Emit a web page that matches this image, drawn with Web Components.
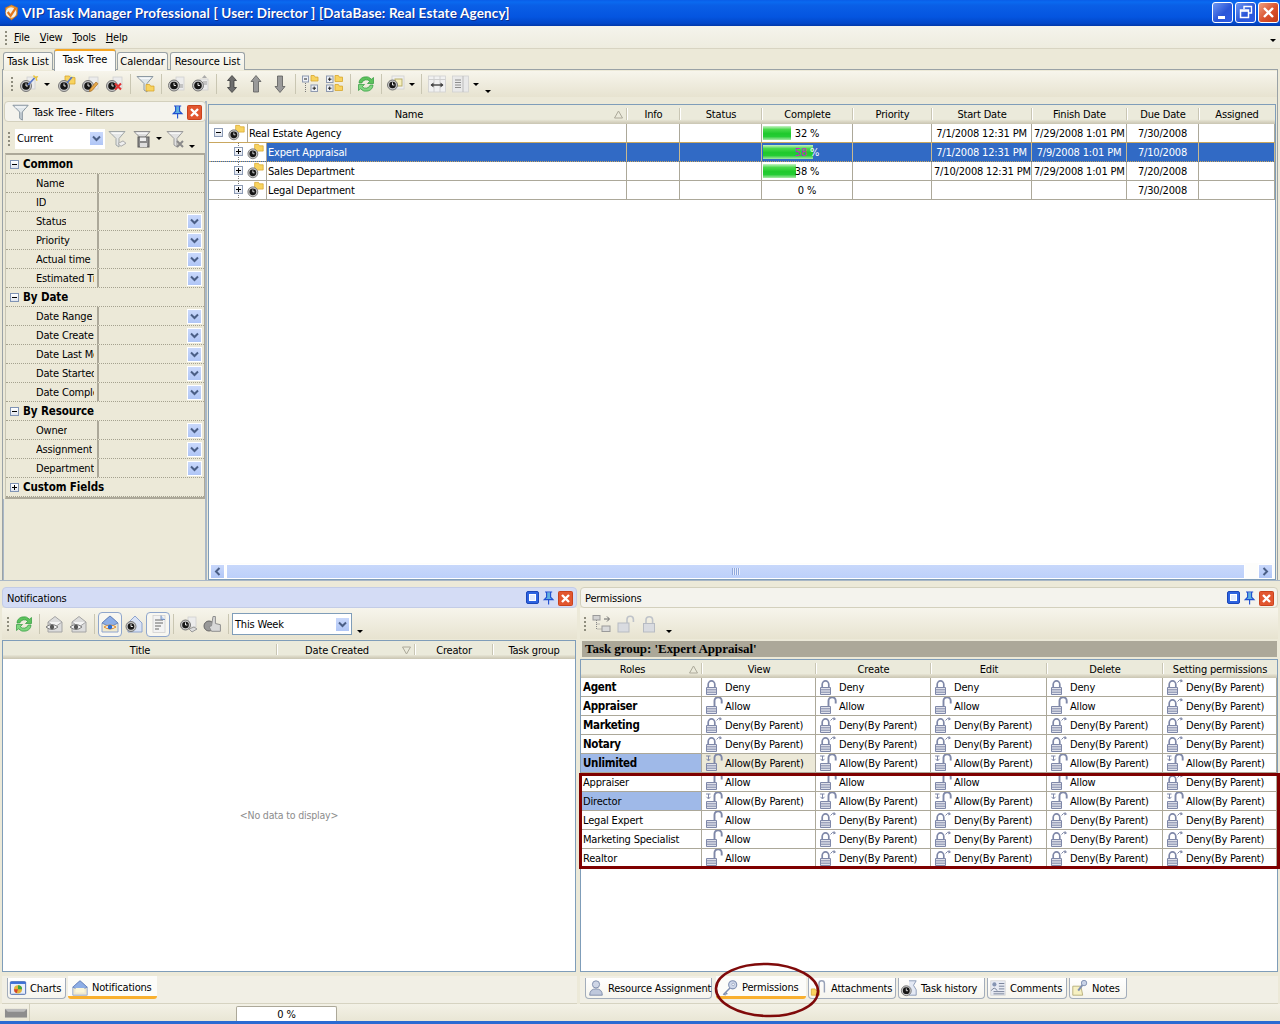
<!DOCTYPE html>
<html lang="en">
<head>
<meta charset="utf-8">
<title>VIP Task Manager Professional</title>
<style>
html,body{margin:0;padding:0;background:#ece9d8}
body{width:1280px;height:1024px;overflow:hidden}
</style>
</head>
<body>
<vip-app></vip-app>
<script>
const UI = '"DejaVu Sans Condensed","Liberation Sans",sans-serif';
function def(tag, css, html) {
  customElements.define(tag, class extends HTMLElement {
    connectedCallback() {
      if (this.shadowRoot) return;
      const r = this.attachShadow({mode: 'open'});
      r.innerHTML = `<style>${css}</style>` + (typeof html === 'function' ? html(this) : html);
    }
  });
}

/* ---------- icon parts ---------- */
const clock = (x, y, r = 5.5) => `<circle cx="${x}" cy="${y}" r="${r}" fill="#c8c8c8" stroke="#6c6c6c" stroke-width=".9"/><circle cx="${x}" cy="${y}" r="${r - 1.7}" fill="#161616"/><path d="M${x} ${y - 2.6}V${y}H${x + 1.9}" stroke="#fff" stroke-width=".9" fill="none"/>`;
const folder = (x, y, w, h) => `<path d="M${x} ${y + h}V${y}h${w * .45}l1 1.6h${w * .55 - 1}V${y + h}z" fill="#f8d35f" stroke="#d7a62d" stroke-width=".8"/>`;
const page = (x, y, w, h, f = '#ececec') => `<rect x="${x}" y="${y}" width="${w}" height="${h}" fill="${f}" stroke="#d0d0d0" stroke-width=".8"/>`;
const funnel = (f = '#dfe6ea', s = '#8d99a3') => `<path d="M1 2.5H17L11 9.5V18L8 16V9.5z" fill="${f}" stroke="${s}" stroke-width="1"/><path d="M3.5 4.2H14.5" stroke="#fff" stroke-width="1"/>`;
const vArrow = (up, down, f = '#9a9a9a') => {
  const s = '#5c5c5c';
  if (up && down) return `<path d="M10 1.5L14.5 6.5H12V13.5H14.5L10 18.5L5.5 13.5H8V6.5H5.5z" fill="#6d6d6d" stroke="#3e3e3e" stroke-width=".8"/>`;
  if (up) return `<path d="M10 1.5L15 7.5H12.5V18H7.5V7.5H5z" fill="${f}" stroke="${s}" stroke-width=".8"/>`;
  return `<path d="M7.5 2H12.5V12.5H15L10 18.5L5 12.5H7.5z" fill="${f}" stroke="${s}" stroke-width=".8"/>`;
};
const lockCol = '#7f88a8';
const lockBody = `<path d="M1.5 10.5h10v7h-10z" fill="#dfe1ea" stroke="${lockCol}" stroke-width="1"/><path d="M1.5 12.8h10M1.5 15.2h10" stroke="${lockCol}" stroke-width="1"/>`;
const closed = `<path d="M3.2 10.5V7.5a3.3 3.6 0 0 1 6.6 0v3" fill="none" stroke="${lockCol}" stroke-width="1.7"/>` + lockBody;
const open = `<path d="M9.5 10.5V4.8a3.6 3.6 0 0 1 7.2 0V7.5" fill="none" stroke="${lockCol}" stroke-width="1.9"/>` + lockBody;
const refresh = `<path d="M3 9A7 6.5 0 0 1 15.5 5.2L17.5 3.5V9.5H11.5L13.8 7.3A4.6 4.2 0 0 0 5.8 9z" fill="#5cc25c" stroke="#2f9a3c" stroke-width=".7"/><path d="M17 11A7 6.5 0 0 1 4.5 14.8L2.5 16.5V10.5H8.5L6.2 12.7A4.6 4.2 0 0 0 14.2 11z" fill="#7fd67f" stroke="#2f9a3c" stroke-width=".7"/>`;
const eye = `<path d="M1 13Q7 8 13 13Q7 18 1 13z" fill="#f2f2f2" stroke="#7b7b7b"/><circle cx="7" cy="13" r="2.2" fill="#555"/>`;
const envGray = `<path d="M3 8L10 2.5L17 8V18H3z" fill="#dcdcdc" stroke="#a4a4a4"/><path d="M3 8L10 13L17 8" fill="#f3f3f3" stroke="#a4a4a4"/>`;
const envBlue = `<path d="M2 9L10 2L18 9V18H2z" fill="#efe9cf" stroke="#8ea4cf"/><path d="M2 9L10 2L18 9L10 13z" fill="#8daee6" stroke="#6b87bd"/>`;
const ICONS = {
  tree: folder(8.5, 1.5, 9.5, 7.5) + clock(6.5, 12, 5.5),
  clockwand: page(8, 3, 8, 12) + clock(7, 12) + `<path d="M9 11L15.5 4" stroke="#5a78c8" stroke-width="1.8"/><path d="M14.5 1.5l1.4 1.7 2.2-.4-1 2 1 1.8" stroke="#e7c23a" fill="none" stroke-width="1.3"/>`,
  clockfold: folder(8, 2, 10, 8) + clock(7, 12) + `<path d="M10 9L15 3" stroke="#5a78c8" stroke-width="1.7"/><path d="M13 1l2 1.6L17.5 2" stroke="#f2f2a0" fill="none"/>`,
  clockedit: page(8, 3, 9, 12) + clock(7, 12) + `<path d="M9 15L15 8l2 1.7-6 7-2.5.8z" fill="#e8a94a" stroke="#a86e22" stroke-width=".7"/>`,
  clockdel: page(8, 3, 9, 11) + clock(7, 12) + `<path d="M10 9.5l6 6M16 9.5l-6 6" stroke="#e03333" stroke-width="2.1"/>`,
  funnelfold: funnel() + folder(10, 10.5, 8, 6.5),
  funnelbig: `<path d="M1 2.5H18L11.5 10V19L8.5 17V10z" fill="#dfe6ea" stroke="#7f8d99" stroke-width="1"/><path d="M3.5 4.5H15.5" stroke="#fff" stroke-width="1"/><path d="M10 10.5V18" stroke="#9fabb5"/>`,
  clockdoc: page(9, 3, 8, 13) + clock(7, 11.5) + `<path d="M12 11h4M12 13h4" stroke="#999"/>`,
  clockup: page(9, 5, 8, 11) + clock(7, 11.5) + `<path d="M13.5 1l2.5 3h-5z" fill="#aaa"/><path d="M12 8h4M12 10h4" stroke="#999"/>`,
  updown: vArrow(1, 1), up: vArrow(1, 0), down: vArrow(0, 1),
  treeco: `<rect x="1.5" y="2" width="6" height="6" fill="#eef1f6" stroke="#8e99b0"/><path d="M3 5H6" stroke="#222"/>` + folder(10, 1.5, 7, 5.5) + `<path d="M4.5 9V18" stroke="#777" stroke-dasharray="1 1"/><rect x="10" y="11" width="6.5" height="6.5" fill="#eef1f6" stroke="#8e99b0"/><path d="M11.5 14.2h3.5M13.2 12.5V16" stroke="#222"/>`,
  treeex: `<rect x="1.5" y="2" width="6.5" height="6.5" fill="#eef1f6" stroke="#8e99b0"/><path d="M3 5.2h3.5M4.7 3.5V7" stroke="#222"/><rect x="1.5" y="11" width="6.5" height="6.5" fill="#eef1f6" stroke="#8e99b0"/><path d="M3 14.2h3.5M4.7 12.5V16" stroke="#222"/>` + folder(10, 1.5, 7.5, 6) + folder(10, 10.5, 7.5, 6),
  refresh,
  clockstack: page(5, 2, 12, 13, '#f0f0f0') + `<rect x="8" y="5" width="7" height="7" fill="#f6efbd" stroke="#b8ae6a"/>` + clock(5.5, 11, 5),
  fitcol: page(1.5, 2, 17, 16, '#f1f1f1') + `<path d="M1.5 5.5h17M7 2v16M13 2v16" stroke="#cfcfcf"/><path d="M4 11h12" stroke="#444" stroke-width="1.4"/><path d="M6.5 8.5L3.5 11l3 2.5zM13.5 8.5l3 2.5-3 2.5z" fill="#444"/>`,
  columns: page(1.5, 2, 16, 16, '#e9e9e9') + `<path d="M12 2v16" stroke="#bbb"/><path d="M4 6h6M4 8.5h6M4 11h6M4 13.5h6" stroke="#8c8c8c"/>`,
  funnelx: funnel('#e4e6e6', '#a1a7a7') + `<path d="M10 14.5l5-2.6 3 2.4-5 3z" fill="#eee" stroke="#aaa"/>`,
  funnelsave: funnel('#dcdcdc', '#8f8f8f') + `<rect x="5" y="8" width="11" height="10" fill="#8a8a8a" stroke="#5b5b5b"/><rect x="7" y="8.5" width="6" height="3.5" fill="#eee"/><rect x="7" y="14" width="7" height="4" fill="#ddd"/>`,
  funneldel: funnel('#e1e1e1', '#9b9b9b') + `<path d="M11 12l6 6M17 12l-6 6" stroke="#8a8a8a" stroke-width="2"/>`,
  pin: `<path d="M5 2.5h9M7 3v6l-3 3h11l-3-3V3M9.5 12v6" stroke="#1f4fd0" stroke-width="1.4" fill="#5fb0df"/>`,
  close: `<rect x="1.5" y="1.5" width="14" height="14" rx="1" fill="#e2562f" stroke="#c9421d"/><path d="M5 5l7 7M12 5l-7 7" stroke="#fff" stroke-width="2.4"/>`,
  restore: `<rect x="1.5" y="1.5" width="12" height="12" rx="1.5" fill="#2d63e0" stroke="#1b46b8"/><rect x="4.5" y="4.5" width="6" height="6" fill="#dfe9ff" stroke="#fff"/>`,
  enveye1: envGray + eye, enveye2: envGray + eye,
  envuser: envBlue + `<path d="M4 13Q10 9 16 13Q10 17 4 13z" fill="#f6f6f6" stroke="#e08c2b"/><circle cx="10" cy="13" r="2.3" fill="#2a6bd0"/>`,
  envclock: `<path d="M4 9L11 2L18 9V18H4z" fill="#d9e2f4" stroke="#8ea4cf"/>` + clock(7, 12.5, 5),
  docs: page(5, 1.5, 12, 17, '#f3f3f3') + `<path d="M7 6h8M7 9h8M7 12h6M7 15h4" stroke="#666"/><path d="M13 1.5v4h4" fill="#bcd0ee" stroke="#7a93bf"/>`,
  clockeye: page(9, 3, 8, 10) + clock(6.5, 11, 5) + `<path d="M10 15l5-2 3 2-5 3z" fill="#ddd" stroke="#999"/>`,
  clockhand: `<circle cx="6" cy="12" r="5" fill="#999" stroke="#666"/><path d="M10 2.5h2.4v7l5 1.2v6.6H8.5L6 12.5l2.5-.6z" fill="#d8d8d8" stroke="#8f8f8f"/>`,
  tree2: `<rect x="1" y="1.5" width="7" height="4.5" fill="#d2d2d2" stroke="#9a9a9a"/><path d="M4.5 6V15H10M4.5 10H8" stroke="#888" stroke-dasharray="1 1" fill="none"/><rect x="10" y="12" width="8" height="5.5" fill="#d9d9d9" stroke="#9a9a9a"/><path d="M12 5h5M15 2.5L17.5 5 15 7.5" stroke="#666" fill="none"/>`,
  unlock: `<path d="M11 9V5.5a3.2 3.2 0 0 1 6.4 0V8" fill="none" stroke="#bfc3c9" stroke-width="1.6"/><rect x="2" y="9" width="11" height="9" fill="#d9dbe0" stroke="#b7bbc2"/>`,
  lockg: `<path d="M6 9.5V6a3.3 3.3 0 0 1 6.6 0v3.5" fill="none" stroke="#bfc3c9" stroke-width="1.6"/><rect x="3.5" y="9.5" width="11" height="8.5" fill="#d9dbe0" stroke="#b7bbc2"/>`,
  deny: closed,
  allow: open,
  denyp: closed + `<path d="M11.5 5.5Q13.5 2 16 4M14.8 2.2l1.6 2-2.2.7" stroke="${lockCol}" fill="none" stroke-width="1"/>`,
  allowp: open + `<path d="M1 3H5.5M3.5 3V7.5M1.5 5.8L3.5 8 5.5 5.8" stroke="${lockCol}" fill="none" stroke-width="1"/>`,
  chart: `<rect x="1.5" y="3" width="17" height="14" rx="1" fill="#e8eefb" stroke="#3c5fa8"/><rect x="1.5" y="3" width="17" height="2.5" fill="#3c6fd6"/><circle cx="10" cy="11.5" r="4.5" fill="#e2b33a"/><path d="M10 11.5V7a4.5 4.5 0 0 1 4.5 4.5z" fill="#3ea53e"/><path d="M10 11.5H5.5a4.5 4.5 0 0 0 3 4.2z" fill="#d6442b"/>`,
  mail: envBlue + `<path d="M5 10h10v5H5z" fill="#fbf6d8"/>`,
  user: `<circle cx="10" cy="6" r="4" fill="#cfd6e6" stroke="#7b89a8"/><path d="M3 18Q3 11 10 11Q17 11 17 18z" fill="#bfc8dc" stroke="#7b89a8"/>`,
  key: `<circle cx="13" cy="6.5" r="4.5" fill="#cfd8ea" stroke="#7f8fb0" stroke-width="1.2"/><circle cx="13.5" cy="6" r="1.4" fill="#fff" stroke="#7f8fb0" stroke-width=".7"/><path d="M10 10L2.5 17.5M5 15l2 2M3.5 16.5l1.6 1.6" stroke="#7f8fb0" stroke-width="1.6"/>`,
  attach: `<path d="M10 14V5a3 3 0 0 1 6 0v10" fill="none" stroke="#98a2b8" stroke-width="1.6"/>` + folder(1.5, 11, 9, 7),
  history: `<path d="M10 2h8l-3 5 3 5v6h-8" fill="#e4e9f4" stroke="#8695b3"/>` + clock(7, 13, 5.5),
  comments: page(2, 2, 16, 16, '#e8ebf3') + `<circle cx="6" cy="6" r="2.3" fill="#8695b3"/><path d="M2.5 13Q6 7.5 9 13M11 5h6M11 8h6M5 14h12M11 11h6M5 16.5h12" stroke="#6f7a92" fill="none"/>`,
  notes: `<path d="M2 8h9l2 10H2z" fill="#f7f1c2" stroke="#b5ad78"/><path d="M8 13L14 5" stroke="#7f8fb0" stroke-width="2.2"/><circle cx="14.5" cy="4.5" r="3" fill="#c8d2e6" stroke="#7f8fb0"/>`,
  logo: `<path d="M9 1L15.5 4 15 12 9 17 3 12 2.5 4z" fill="#f29a2e" stroke="#b9651a" stroke-width=".6"/><circle cx="8.5" cy="9" r="5.6" fill="#f4f1e6"/><path d="M5 8.5L8 12.5 13.5 4" stroke="#e5771a" stroke-width="2.4" fill="none"/>`,
  flag: `<rect x="1" y="2" width="23" height="9" fill="#8d8d8d"/><path d="M1 2H24L21 5H4z" fill="#bcbcbc"/>`
};

def('x-ico', ':host{display:inline-flex;flex:none;line-height:0}', el => {
  const s = +el.getAttribute('size') || 20;
  const v = el.getAttribute('vb') || '20';
  return `<svg xmlns="http://www.w3.org/2000/svg" width="${s}" height="${s}" viewBox="0 0 ${v} ${v}">${ICONS[el.getAttribute('name')] || ''}</svg>`;
});

/* ---------- chrome ---------- */
def('win-btn', `:host{display:block;width:21px;height:21px;box-sizing:border-box;border:1px solid #fff;border-radius:3px;background:linear-gradient(135deg,#6f97f2,#2a56d8 55%,#2d5be4);position:relative}
 :host([kind=close]){background:linear-gradient(135deg,#ee9f80,#d9502b 55%,#c23a16)} svg{display:block}`, el => {
  const k = el.getAttribute('kind');
  const p = k === 'close' ? '<path d="M5 5l9 9M14 5l-9 9" stroke="#fff" stroke-width="2.4"/>'
    : k === 'min' ? '<rect x="5" y="13" width="7" height="3" fill="#fff"/>'
    : '<path d="M8 6V3.5h7.5V10H13" fill="none" stroke="#fff" stroke-width="1.4"/><rect x="4.5" y="7" width="8" height="7.5" fill="none" stroke="#fff" stroke-width="1.5"/><path d="M4.5 8h8" stroke="#fff" stroke-width="1.6"/>';
  return `<svg width="19" height="19" viewBox="0 0 19 19">${p}</svg>`;
});

def('win-title', `:host{display:flex;align-items:center;height:26px;box-sizing:border-box;padding:0 1px 1px 3px;
  background:linear-gradient(#0a5de8 0,#0a6af0 8%,#0a5fe6 20%,#0455e0 65%,#0247c8 90%,#0238a8);color:#fff;flex:none}
 .t{font:bold 13.5px Lato,"Liberation Sans",sans-serif;letter-spacing:.15px;margin-left:2px;flex:1;white-space:nowrap;text-shadow:1px 1px 0 #0f2f90}
 .b{display:flex;gap:2px}`,
 `<x-ico name="logo" size="17" vb="18"></x-ico><span class="t"><slot></slot></span><span class="b"><win-btn kind="min"></win-btn><win-btn kind="max"></win-btn><win-btn kind="close"></win-btn></span>`);

def('tool-grip', `:host{display:block;width:2px;height:14px;flex:none;background:repeating-linear-gradient(#8f8d7e 0 2px,transparent 2px 4px)}`, '');

def('menu-item', `:host{display:block;margin-right:10px} ::slotted(u){text-decoration:underline}`, '<slot></slot>');
def('menu-bar', `:host{display:flex;align-items:center;height:23px;box-sizing:border-box;padding:1px 4px 0 5px;flex:none;background:linear-gradient(#f5f4ec,#eeecdf);border-bottom:1px solid #d8d4c2;color:#000}
 tool-grip{margin-right:7px} .end{margin-left:auto;margin-top:6px;width:0;height:0;border:3px solid transparent;border-top-color:#000;border-bottom:0}`, `<tool-grip></tool-grip><slot></slot><span class="end"></span>`);

def('doc-tab', `:host{display:flex;align-items:center;justify-content:center;box-sizing:border-box;height:18px;margin-top:3px;padding:0 1px;letter-spacing:0;
   background:linear-gradient(#fbfaf6,#f0eee2);border:1px solid #9aa2a6;border-bottom:0;border-radius:3px 3px 0 0;color:#000;flex:none}
 :host([active]){height:22px;margin-top:0;background:#fcfcfa;border-color:#9aa2a6;border-top:2px solid #f5a623;position:relative;z-index:2;padding-bottom:3px}`, '<slot></slot>');
def('doc-tabs', `:host{display:flex;gap:1px;height:20px;padding-left:3px;flex:none;background:#ece9d8;position:relative;z-index:2}`, '<slot></slot>');

/* toolbar pieces */
def('t-btn', `:host{display:flex;align-items:center;justify-content:center;width:var(--w,24px);height:22px;flex:none;box-sizing:border-box}
 :host([on]){border:1px solid #8fa6cc;border-radius:4px;background:#f8f7f1;height:25px}`, el => `<x-ico name="${el.getAttribute('icon')}" size="${el.getAttribute('size') || 20}"></x-ico>`);
def('t-sep', `:host{display:block;width:var(--w,7px);height:20px;flex:none;background:linear-gradient(#c9c6b2,#c9c6b2) center/1px 100% no-repeat}`, '');
def('t-arr', `:host{display:flex;align-items:center;width:var(--w,10px);padding-left:var(--pl,3px);box-sizing:border-box;height:20px;flex:none}
 i{display:block;width:0;height:0;border:3px solid transparent;border-top-color:#000;border-bottom:0}`, '<i></i>');
def('t-more', `:host{display:flex;align-items:flex-end;height:20px;width:var(--w,12px);padding-left:var(--pl,3px);box-sizing:border-box;flex:none}
 i{display:block;width:0;height:0;border:3px solid transparent;border-top-color:#000;border-bottom:0;margin-bottom:1px}`, '<i></i>');
def('tool-strip', `:host{display:flex;align-items:center;flex:none;height:var(--h,26px);box-sizing:border-box;padding:var(--pt,0) 0 0 var(--pl,8px);background:linear-gradient(#f7f5ec,#e7e3d0)}
 tool-grip{margin-right:var(--gm,4px)}`, '<tool-grip></tool-grip><slot></slot>');

def('drop-btn', `:host{display:flex;align-items:center;justify-content:center;width:15px;height:15px;flex:none;box-sizing:border-box;background:linear-gradient(#c9d8fb,#b0c6f6);border:1px solid #fff}`,
  `<svg width="11" height="11" viewBox="0 0 11 11"><path d="M2 3.5L5.5 7 9 3.5" fill="none" stroke="#4b5f86" stroke-width="2"/></svg>`);
def('xp-combo', `:host{display:flex;align-items:center;justify-content:space-between;box-sizing:border-box;background:#fff;flex:none;height:20px;padding:0 1px 0 2px;color:#000}
 :host([framed]){border:1px solid #7f9db9} span{white-space:nowrap}`, '<span><slot></slot></span><drop-btn></drop-btn>');

def('dock-head', `:host{display:flex;align-items:center;height:21px;box-sizing:border-box;padding:1px 2px 0 4px;flex:none;background:#f4f3ed;border:1px solid #d3d0bd;border-radius:4px;color:#000}
 :host([blue]){background:#d4dcf5;border-color:#c3cce6}
 .t{flex:1;white-space:nowrap} .i{display:flex;gap:0;align-items:center}`,
 el => `<slot name="lead"></slot><span class="t"><slot></slot></span><span class="i">${el.hasAttribute('restore') ? '<x-ico name="restore" size="16" vb="16"></x-ico>' : ''}<x-ico name="pin" size="16"></x-ico><x-ico name="close" size="17" vb="17"></x-ico></span>`);

/* header cells */
def('hdr-cell', `:host{display:flex;align-items:center;justify-content:center;position:relative;box-sizing:border-box;min-width:0;color:#000;white-space:nowrap;height:100%}
 :host([sort]){padding-right:18px}
 :host(:not(:last-child))::after{content:"";position:absolute;right:0;top:3px;bottom:4px;width:1px;background:#c9c6b4;box-shadow:1px 0 0 #fff}
 svg{position:absolute;right:4px;top:5px}`,
 el => `<slot></slot>` + (el.hasAttribute('sort') ? `<svg width="9" height="9" viewBox="0 0 9 9"><path d="${el.getAttribute('sort') === 'up' ? 'M4.5 1L8.5 8H.5z' : 'M.5 1H8.5L4.5 8z'}" fill="none" stroke="#aca899"/></svg>` : ''));
def('grid-head', `:host{display:grid;grid-template-columns:var(--cols);height:var(--hh,19px);box-sizing:border-box;background:linear-gradient(#ebeadb 0,#ebeadb 75%,#d9d5c3 88%,#c9c5b2);flex:none}`, '<slot></slot>');

/* data-cell */
def('g-cell', `:host{display:flex;align-items:center;box-sizing:border-box;height:18px;min-width:0;overflow:hidden;white-space:nowrap;border-right:1px solid var(--bc,#aca899);padding:0 2px}
 :host([c]){justify-content:center;padding:0}`, '<slot></slot>');
def('g-row', `:host{display:grid;grid-template-columns:var(--cols);height:19px;box-sizing:border-box;border-bottom:1px solid #aca899;background:#fff;color:#000;flex:none}
 :host([sel]){--bc:#c9b98f;background:#316ac5;color:#fff;border-bottom:1px dotted #c9a760;box-shadow:0 -1px 0 0 #c9a760}`, '<slot></slot>');

/* tree name cell */
def('tree-cell', `:host{display:flex;height:18px;flex:1;min-width:0;background:#fff;color:#000}
 .bw{flex:none;width:9px;height:100%}
 :host([level]) .bw{background:repeating-linear-gradient(#777 0 1px,transparent 1px 2px) center/1px 100% no-repeat}
 .b{display:block;width:9px;height:9px;box-sizing:border-box;border:1px solid #8c9bb5;background:linear-gradient(#fff,#dfe4ee);margin-top:4px;position:relative}
 .b::before{content:"";position:absolute;left:1px;right:1px;top:3px;height:1px;background:#000}
 :host(:not([open])) .b::after{content:"";position:absolute;top:1px;bottom:1px;left:3px;width:1px;background:#000}
 .txt{flex:1;padding-left:1px;display:flex;align-items:center;border-left:1px solid #aca899;white-space:nowrap;margin-left:1px}
 :host([sel]) .txt{background:#316ac5;color:#fff}`,
 el => {
   const lvl = +el.getAttribute('level') || 0;
   return `<span style="width:${lvl ? 25 : 5}px;flex:none"></span><span class="bw"><span class="b"></span></span><x-ico name="tree" size="18" style="margin-left:${lvl ? 4 : 5}px"></x-ico><span class="txt"><slot></slot></span>`;
 });

def('prog-cell', `:host{display:flex;align-items:center;justify-content:center;position:relative;height:18px;box-sizing:border-box;border-right:1px solid var(--bc,#aca899);white-space:nowrap}
 .bar{position:absolute;left:1px;top:2px;height:14px;background:linear-gradient(#c7f2c5 0,#48d94a 25%,#1fc92c 55%,#26cc35 75%,#a7e9a5 100%)}
 span{position:relative}`,
 el => `<div class="bar" style="width:${el.getAttribute('bar') || 0}px;${el.getAttribute('bar') ? '' : 'display:none'}"></div><span><slot></slot></span>`);

/* permissions */
def('perm-cell', `:host{display:flex;align-items:center;height:18px;box-sizing:border-box;border-right:1px solid #aca899;padding-left:3px;white-space:nowrap;color:#000;min-width:0;overflow:hidden}
 :host([hl]){background:#ece9d8}`,
 el => `<x-ico name="${el.getAttribute('k')}" size="20"></x-ico><span><slot></slot></span>`);
def('role-cell', `:host{display:flex;align-items:center;height:18px;box-sizing:border-box;border-right:1px solid #aca899;padding-left:2px;white-space:nowrap;color:#000}
 :host([b]){font-weight:bold;font-size:11.5px;letter-spacing:-.3px} :host([hl]){background:#9fb9e8}`, '<slot></slot>');

/* property grid */
def('pg-group', `:host{display:flex;align-items:center;height:19px;box-sizing:border-box;border-bottom:1px dotted #a5a28f;font-weight:bold;font-size:11.5px;letter-spacing:-.1px;padding-left:4px;color:#000;flex:none}
 .b{width:9px;height:9px;box-sizing:border-box;border:1px solid #7f93b4;background:linear-gradient(#fff,#dfe4ee);margin-right:4px;position:relative}
 .b::before{content:"";position:absolute;left:1px;right:1px;top:3px;height:1px;background:#000}
 :host(:not([open])) .b::after{content:"";position:absolute;top:1px;bottom:1px;left:3px;width:1px;background:#000}`, `<span class="b"></span><slot></slot>`);
def('pg-row', `:host{display:grid;grid-template-columns:91px 1fr;height:19px;box-sizing:border-box;border-bottom:1px dotted #a5a28f;color:#000;flex:none}
 .l{padding-left:30px;white-space:nowrap;display:flex;align-items:center;width:88px;box-sizing:border-box}
 .l span{display:block;overflow:hidden}
 .v{display:flex;align-items:center;justify-content:flex-end;padding-right:2px;border-left:2px solid #aca899}`,
 el => `<div class="l"><span><slot></slot></span></div><div class="v">${el.hasAttribute('drop') ? '<drop-btn></drop-btn>' : ''}</div>`);

/* bottom tabs */
def('b-tab', `:host{display:flex;align-items:center;box-sizing:border-box;height:21px;width:var(--w);background:linear-gradient(#fff,#f6f5ee);border:1px solid #a3adbb;border-top:0;border-radius:0 0 4px 4px;color:#000;white-space:nowrap;flex:none;padding-left:var(--p,1px)}
 :host([active]){height:23px;margin-top:-2px;padding-top:3px;background:#fcfcf9;border:0;border-bottom:3px solid #f9b02f;border-radius:0 0 3px 3px}
 x-ico{margin-right:3px}`, el => `<x-ico name="${el.getAttribute('icon')}" size="18"></x-ico><slot></slot>`);
def('b-tabs', `:host{display:flex;gap:var(--g,2px);height:28px;box-sizing:border-box;padding-left:var(--pl,4px);padding-top:2px;background:#f1efe5;flex:none;border-bottom:1px solid #d6d3c1}`, '<slot></slot>');

def('status-bar', `:host{display:flex;height:20px;box-sizing:border-box;flex:none;background:linear-gradient(#f3f1e6,#e9e6d5);border-bottom:3px solid #2a6ad2;align-items:stretch}
 .ic{width:30px;padding:3px 0 0 4px;box-sizing:border-box;border-right:1px solid #d2cfbd;flex:none}
 .gap{width:206px;flex:none}
 .p{width:101px;box-sizing:border-box;background:#fff;border:1px solid #aca899;border-bottom:0;border-radius:2px 2px 0 0;display:flex;align-items:center;justify-content:center;flex:none;color:#000;margin-top:2px}`,
 `<div class="ic"><x-ico name="flag" size="24" vb="25"></x-ico></div><div class="gap"></div><div class="p"><slot></slot></div>`);

/* ---------- panels ---------- */
def('filter-panel', `:host{display:flex;flex-direction:column;width:203px;flex:none;box-sizing:border-box;border-right:2px solid #a9b7c6;background:#ece9d8}
 dock-head{margin-right:-1px}
 .body{display:flex;flex-direction:column;margin:3px 0 0 1px;border-top:2px solid #aca899;border-bottom:2px solid #aca899;border-left:1px solid #c9c6b4;border-right:1px solid #aca899}
 .fill{flex:1;border-left:1px solid #a9b7c6;margin-left:-1px}
 .strip{display:flex;align-items:center;height:28px;box-sizing:border-box;padding:5px 0 0 4px;flex:none}
 tool-grip{margin-right:5px}
 xp-combo{width:90px;margin-right:1px}`,
 `<dock-head><x-ico slot="lead" name="funnelbig" size="18" style="margin:0 3px 0 3px"></x-ico>Task Tree - Filters</dock-head>
  <div class="strip"><tool-grip></tool-grip><xp-combo>Current</xp-combo><t-btn icon="funnelx" style="--w:24px"></t-btn><t-btn icon="funnelsave" style="--w:26px"></t-btn><t-arr style="--w:8px;--pl:0px"></t-arr><t-btn icon="funneldel" style="--w:24px"></t-btn><t-more style="--w:10px;--pl:1px"></t-more></div>
  <div class="body">
   <pg-group open>Common</pg-group><pg-row>Name</pg-row><pg-row>ID</pg-row><pg-row drop>Status</pg-row><pg-row drop>Priority</pg-row><pg-row drop>Actual time</pg-row><pg-row drop>Estimated Time</pg-row>
   <pg-group open>By Date</pg-group><pg-row drop>Date Range</pg-row><pg-row drop>Date Created</pg-row><pg-row drop>Date Last Modified</pg-row><pg-row drop>Date Started</pg-row><pg-row drop>Date Completed</pg-row>
   <pg-group open>By Resource</pg-group><pg-row drop>Owner</pg-row><pg-row drop>Assignment</pg-row><pg-row drop>Department</pg-row>
   <pg-group>Custom Fields</pg-group>
  </div><div class="fill"></div>`);

def('scroll-h', `:host{display:flex;align-items:center;height:16px;flex:none;padding:0 2px 0 1px;gap:1px;background:#fdfdfb}
 .a{width:15px;height:15px;background:linear-gradient(#c9d8fb,#b0c6f6);display:flex;align-items:center;justify-content:center;flex:none;border:1px solid #fff;box-sizing:border-box}
 .t{width:1019px;height:15px;background:linear-gradient(#c8d8fb,#bcd0fa);border:1px solid #fff;box-sizing:border-box;display:flex;align-items:center;justify-content:center;flex:none}
 .t i{display:block;width:8px;height:7px;background:repeating-linear-gradient(90deg,#8fa8dc 0 1px,#e6edfd 1px 2px)}
 .f{flex:1}`,
 `<div class="a"><svg width="9" height="11" viewBox="0 0 9 11"><path d="M6.5 2L3 5.5 6.5 9" fill="none" stroke="#4b5f86" stroke-width="2"/></svg></div><div class="t"><i></i></div><div class="f"></div><div class="a"><svg width="9" height="11" viewBox="0 0 9 11"><path d="M2.5 2L6 5.5 2.5 9" fill="none" stroke="#4b5f86" stroke-width="2"/></svg></div>`);

def('tree-grid', `:host{display:flex;flex-direction:column;flex:1;min-width:0;box-sizing:border-box;border:1px solid #7f9db9;background:#fff;margin:3px 0 0 1px;--cols:418px 53px 82px 91px 79px 100px 95px 72px 1fr}
 .fill{flex:1}`,
 `<grid-head><hdr-cell sort="up">Name</hdr-cell><hdr-cell>Info</hdr-cell><hdr-cell>Status</hdr-cell><hdr-cell>Complete</hdr-cell><hdr-cell>Priority</hdr-cell><hdr-cell>Start Date</hdr-cell><hdr-cell>Finish Date</hdr-cell><hdr-cell>Due Date</hdr-cell><hdr-cell>Assigned</hdr-cell></grid-head>
 <g-row><g-cell style="padding:0"><tree-cell open>Real Estate Agency</tree-cell></g-cell><g-cell></g-cell><g-cell></g-cell><prog-cell bar="28">32 %</prog-cell><g-cell></g-cell><g-cell c>7/1/2008 12:31 PM</g-cell><g-cell>7/29/2008 1:01 PM</g-cell><g-cell c>7/30/2008</g-cell><g-cell></g-cell></g-row>
 <g-row sel><g-cell style="padding:0"><tree-cell level="1" sel>Expert Appraisal</tree-cell></g-cell><g-cell></g-cell><g-cell></g-cell><prog-cell bar="50"><span style="color:#c81fc8">58 </span>%</prog-cell><g-cell></g-cell><g-cell c>7/1/2008 12:31 PM</g-cell><g-cell c>7/9/2008 1:01 PM</g-cell><g-cell c>7/10/2008</g-cell><g-cell></g-cell></g-row>
 <g-row><g-cell style="padding:0"><tree-cell level="1">Sales Department</tree-cell></g-cell><g-cell></g-cell><g-cell></g-cell><prog-cell bar="33">38 %</prog-cell><g-cell></g-cell><g-cell>7/10/2008 12:31 PM</g-cell><g-cell>7/29/2008 1:01 PM</g-cell><g-cell c>7/20/2008</g-cell><g-cell></g-cell></g-row>
 <g-row><g-cell style="padding:0"><tree-cell level="1">Legal Department</tree-cell></g-cell><g-cell></g-cell><g-cell></g-cell><prog-cell>0 %</prog-cell><g-cell></g-cell><g-cell></g-cell><g-cell></g-cell><g-cell c>7/30/2008</g-cell><g-cell></g-cell></g-row>
 <div class="fill"></div><scroll-h></scroll-h>`);

def('notif-panel', `:host{display:flex;flex-direction:column;width:575px;flex:none;margin-left:2px;min-height:0}
 tool-strip{--h:31px;--pt:1px;--pl:5px;--gm:3px}
 .grid{flex:1;display:flex;flex-direction:column;border:1px solid #7f9db9;background:#fff;--cols:274px 138px 78px 1fr;--hh:18px;margin:1px 1px 4px 0;min-height:0}
 .none{flex:1;display:flex;align-items:center;justify-content:center;color:#8c8c8c;font-size:10.5px}
 b-tabs{--pl:5px;--g:2px}
 xp-combo{width:120px;height:22px}`,
 `<dock-head blue restore>Notifications</dock-head>
 <tool-strip><t-btn icon="refresh" style="--w:24px"></t-btn><t-sep></t-sep><t-btn icon="enveye1"></t-btn><t-btn icon="enveye2"></t-btn><t-sep></t-sep><t-btn on icon="envuser"></t-btn><t-btn icon="envclock"></t-btn><t-btn on icon="docs"></t-btn><t-sep></t-sep><t-btn icon="clockeye"></t-btn><t-btn icon="clockhand"></t-btn><t-sep></t-sep><xp-combo framed>This Week</xp-combo><t-more></t-more></tool-strip>
 <div class="grid"><grid-head><hdr-cell>Title</hdr-cell><hdr-cell sort="down">Date Created</hdr-cell><hdr-cell>Creator</hdr-cell><hdr-cell>Task group</hdr-cell></grid-head><div class="none">&lt;No data to display&gt;</div></div>
 <b-tabs><b-tab icon="chart" style="--w:59px">Charts</b-tab><b-tab active icon="mail" style="--w:89px;--p:3px">Notifications</b-tab></b-tabs>`);

const K = {D: 'deny', A: 'allow', DP: 'denyp', AP: 'allowp'};
const T = {D: 'Deny', A: 'Allow', DP: 'Deny(By Parent)', AP: 'Allow(By Parent)'};
const permRow = (role, bold, hl, cells, hlFirst) => `<g-row><role-cell ${bold ? 'b' : ''} ${hl ? 'hl' : ''}>${role}</role-cell>` +
  cells.map((c, i) => `<perm-cell k="${K[c]}" ${hlFirst && i === 0 ? 'hl' : ''}>${T[c]}</perm-cell>`).join('') + `</g-row>`;
def('perm-panel', `:host{display:flex;flex-direction:column;width:698px;flex:none;margin-left:3px;min-height:0}
 tool-strip{--h:31px;--pt:1px;--pl:4px;--gm:4px}
 .bar{height:16px;background:#aca899;margin:2px 1px 2px 2px;font:bold 13px "Liberation Serif",serif;letter-spacing:-.05px;color:#000;padding-left:3px;display:flex;align-items:center;flex:none;white-space:nowrap}
 .grid{flex:1;display:flex;flex-direction:column;border:1px solid #7f9db9;background:#fff;--cols:121px 114px 115px 116px 116px 1fr;--hh:18px;margin:0 0 4px 0;min-height:0}
 b-tabs{--pl:5px;--g:2px}`,
 `<dock-head restore>Permissions</dock-head>
 <tool-strip><t-btn icon="tree2" style="--w:24px"></t-btn><t-btn icon="unlock"></t-btn><t-btn icon="lockg"></t-btn><t-more></t-more></tool-strip>
 <div class="bar">Task group: 'Expert Appraisal'</div>
 <div class="grid"><grid-head><hdr-cell sort="up">Roles</hdr-cell><hdr-cell>View</hdr-cell><hdr-cell>Create</hdr-cell><hdr-cell>Edit</hdr-cell><hdr-cell>Delete</hdr-cell><hdr-cell>Setting permissions</hdr-cell></grid-head>` +
 permRow('Agent', 1, 0, ['D', 'D', 'D', 'D', 'DP']) +
 permRow('Appraiser', 1, 0, ['A', 'A', 'A', 'A', 'DP']) +
 permRow('Marketing', 1, 0, ['DP', 'DP', 'DP', 'DP', 'DP']) +
 permRow('Notary', 1, 0, ['DP', 'DP', 'DP', 'DP', 'DP']) +
 permRow('Unlimited', 1, 1, ['AP', 'AP', 'AP', 'AP', 'AP'], 1) +
 permRow('Appraiser', 0, 0, ['A', 'A', 'A', 'A', 'DP']) +
 permRow('Director', 0, 1, ['AP', 'AP', 'AP', 'AP', 'AP']) +
 permRow('Legal Expert', 0, 0, ['A', 'DP', 'DP', 'DP', 'DP']) +
 permRow('Marketing Specialist', 0, 0, ['A', 'DP', 'DP', 'DP', 'DP']) +
 permRow('Realtor', 0, 0, ['A', 'DP', 'DP', 'DP', 'DP']) +
 `</div>
 <b-tabs><b-tab icon="user" style="--w:127px">Resource Assignment</b-tab><b-tab active icon="key" style="--w:90px;margin-left:2px;--p:5px">Permissions</b-tab><b-tab icon="attach" style="--w:88px">Attachments</b-tab><b-tab icon="history" style="--w:87px">Task history</b-tab><b-tab icon="comments" style="--w:80px">Comments</b-tab><b-tab icon="notes" style="--w:58px">Notes</b-tab></b-tabs>`);

def('vip-app', `:host{display:flex;flex-direction:column;position:relative;width:1280px;height:1024px;overflow:hidden;background:#ece9d8;font:11px ${UI};letter-spacing:-.18px;color:#000}
 .top{display:flex;flex-direction:column;height:511px;flex:none;box-sizing:border-box;margin:0 2px;border:1px solid #9aa2a6;border-bottom:0;padding:1px 0 0}
 .split{flex:1;display:flex;min-height:0;padding:4px 1px 0 1px}
 .sp{height:6px;flex:none;background:#ece9d8;border-top:1px solid #a9b7c6;box-sizing:border-box}
 .bottom{display:flex;height:418px;flex:none;box-sizing:border-box;padding-top:1px;background:#ece9d8}
 .ring{position:absolute;left:710px;top:958px;pointer-events:none}
 .box{position:absolute;left:579px;top:773px;width:701px;height:96px;box-sizing:border-box;border:3px solid #7f0000;pointer-events:none}`,
 `<win-title>VIP Task Manager Professional [ User: Director ] [DataBase: Real Estate Agency]</win-title>
 <menu-bar><menu-item><u>F</u>ile</menu-item><menu-item><u>V</u>iew</menu-item><menu-item><u>T</u>ools</menu-item><menu-item><u>H</u>elp</menu-item></menu-bar>
 <doc-tabs><doc-tab style="width:50px">Task List</doc-tab><doc-tab active style="width:62px">Task Tree</doc-tab><doc-tab style="width:51px">Calendar</doc-tab><doc-tab style="width:75px;margin-left:1px">Resource List</doc-tab></doc-tabs>
 <section class="top">
  <tool-strip>
   <t-btn icon="clockwand"></t-btn><t-arr></t-arr><span style="width:4px;flex:none"></span><t-btn icon="clockfold"></t-btn><t-btn icon="clockedit"></t-btn><t-btn icon="clockdel"></t-btn><t-sep></t-sep>
   <t-btn icon="funnelfold"></t-btn><t-sep></t-sep><t-btn icon="clockdoc"></t-btn><t-btn icon="clockup"></t-btn><t-sep></t-sep>
   <t-btn icon="updown"></t-btn><t-btn icon="up"></t-btn><t-btn icon="down"></t-btn><t-sep></t-sep>
   <t-btn icon="treeco"></t-btn><t-btn icon="treeex"></t-btn><t-sep></t-sep><t-btn icon="refresh"></t-btn><t-sep></t-sep>
   <t-btn icon="clockstack"></t-btn><t-arr style="--w:9px;--pl:0px"></t-arr><t-sep></t-sep><t-btn icon="fitcol"></t-btn><t-btn icon="columns"></t-btn><t-arr style="--w:9px;--pl:0px"></t-arr><t-more style="--w:12px"></t-more>
  </tool-strip>
  <div class="split"><filter-panel></filter-panel><tree-grid></tree-grid></div>
 </section>
 <div class="sp"></div>
 <section class="bottom"><notif-panel></notif-panel><perm-panel></perm-panel></section>
 <status-bar>0 %</status-bar>
 <div class="box"></div>
 <svg class="ring" width="116" height="66" viewBox="0 0 116 66"><ellipse cx="57" cy="32" rx="51" ry="26" fill="none" stroke="#7f0a0a" stroke-width="2.6" transform="rotate(2 57 32)"/></svg>`);
</script>
</body>
</html>
